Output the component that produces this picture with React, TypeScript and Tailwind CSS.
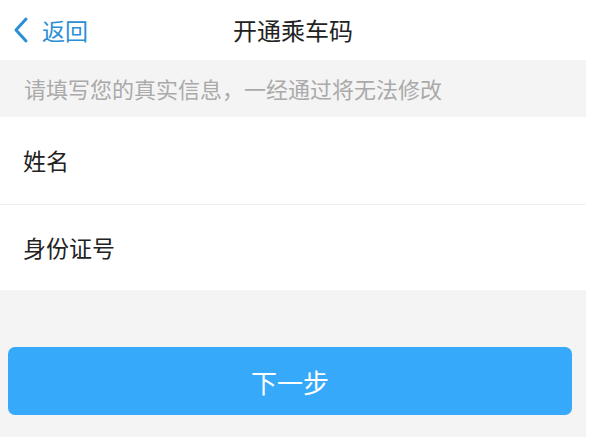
import React from "react";

export default function App() {
  const font = { fontFamily: '"Noto Sans CJK SC", "Noto Sans", sans-serif' };
  return (
    <div className="flex w-[590px] h-[437px] bg-white overflow-hidden" style={font}>
      <div className="flex flex-col w-[586px] h-full bg-[#f4f4f4]">
        <div className="relative flex items-center h-[60px] bg-white">
          <div className="flex items-center pl-[12px] text-[#2b8fd6]">
            <svg width="18" height="28" viewBox="0 0 18 28" fill="none">
              <path d="M14 3 L4 14 L14 25" stroke="#2b8fd6" strokeWidth="3" strokeLinecap="round" strokeLinejoin="round" />
            </svg>
            <span className="ml-[12px] text-[23px] leading-none">返回</span>
          </div>
          <div className="absolute left-0 right-0 text-center text-[24px] leading-none text-[#222]">开通乘车码</div>
        </div>
        <div className="flex items-center h-[57px] pl-[24px] text-[22px] text-[#aaaaaa]">
          请填写您的真实信息，一经通过将无法修改
        </div>
        <div className="bg-white">
          <div className="flex items-center h-[88px] pl-[23px] text-[23px] text-[#222] border-b border-[#efefef]">
            姓名
          </div>
          <div className="flex items-center h-[85px] pl-[23px] text-[23px] text-[#222]">身份证号</div>
        </div>
        <div className="px-[8px] pt-[57px]">
          <div className="flex items-center justify-center w-[564px] h-[68px] rounded-[7px] bg-[#36a9fb] text-white text-[26px]">
            下一步
          </div>
        </div>
      </div>
    </div>
  );
}
